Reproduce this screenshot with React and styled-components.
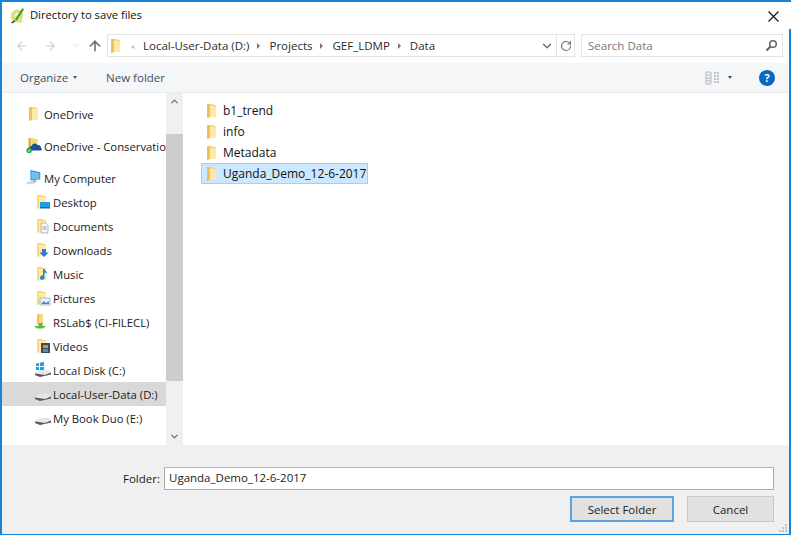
import styled, { createGlobalStyle } from "styled-components";
import { ArrowLeft, ArrowRight, ArrowUp, ChevronDown, ChevronUp, RotateCw } from "lucide-react";

const Global = createGlobalStyle`
  html, body { margin: 0; padding: 0; background: #fff; }
  * { box-sizing: border-box; }
  body { font-family: "Open Sans", "Noto Sans", "Liberation Sans", sans-serif; font-size: 11.5px; color: #1a1a1a; }
  svg { flex-shrink: 0; }
`;

const Ventana = styled.div`
  width: 791px;
  height: 535px;
  border: solid #1883d7;
  border-width: 2px 2px 1px 2px;
  display: flex;
  flex-direction: column;
  position: relative;
  &::after {
    content: "";
    position: absolute;
    top: 0;
    right: -2px;
    width: 2px;
    height: 27px;
    background: #fff;
  }
`;

const TitleBar = styled.div`
  height: 28px;
  display: flex;
  align-items: center;
  padding: 0 10px 0 8px;
  gap: 5px;
  font-size: 11.2px;
  color: #111;
`;
const Titulo = styled.span`flex: 1; margin-top: -4px;`;
const LogoWrap = styled.span`display: flex; margin-top: -1px;`;

const NavBar = styled.div`
  height: 33px;
  display: flex;
  align-items: flex-start;
  padding: 4px 6px 0 8px;
`;
const NavBtn = styled.span`
  width: ${p => p.$w || 24}px;
  height: 23px;
  display: flex;
  align-items: center;
  justify-content: center;
  color: ${p => p.$dark ? "#6f6f6f" : "#cfcfcf"};
`;
const Address = styled.div`
  width: 468px;
  height: 23px;
  border: 1px solid #e3e3e3;
  display: flex;
  align-items: center;
  padding-left: 3px;
  color: #2b2b2b;
`;
const Crumbs = styled.div`flex: 1; display: flex; align-items: center; min-width: 0;`;
const Crumb = styled.span`white-space: nowrap;`;
const Sep = styled.span`
  width: 0; height: 0;
  border-left: 3px solid #777;
  border-top: 3px solid transparent;
  border-bottom: 3px solid transparent;
  margin: 0 9px 0 8px;
`;
const Quote = styled.span`color: #888; font-size: 8px; margin: 0 8px 0 10px;`;
const AddrTool = styled.span`
  width: 18px;
  height: 21px;
  display: flex;
  align-items: center;
  justify-content: center;
  color: #6f6f6f;
  border-left: ${p => p.$sep ? "1px solid #e3e3e3" : "none"};
`;
const SearchBox = styled.div`
  width: 202px;
  height: 23px;
  margin-left: 6px;
  border: 1px solid #e3e3e3;
  display: flex;
  align-items: center;
  justify-content: space-between;
  padding: 0 4px 0 6px;
  color: #777;
`;

const ToolBar = styled.div`
  height: 30px;
  background: #f5f6f7;
  border-bottom: 1px solid #e9eaeb;
  display: flex;
  align-items: center;
  padding: 0 14px 0 18px;
  color: #3d5066;
  flex-shrink: 0;
`;
const Organize = styled.span`margin-right: 5px;`;
const Caret = styled.span`
  width: 0; height: 0;
  margin-left: ${p => p.$ml || 0}px;
  border-top: 3px solid ${p => p.$c || "#555"};
  border-left: 2.5px solid transparent;
  border-right: 2.5px solid transparent;
`;
const NewFolder = styled.span`margin-left: 29px; flex: 1;`;
const Help = styled.span`
  width: 16px;
  height: 16px;
  border-radius: 50%;
  background: #0a67c2;
  color: #fff;
  font-size: 11px;
  font-weight: 700;
  display: flex;
  align-items: center;
  justify-content: center;
  margin-left: 27px;
`;

const Content = styled.div`
  flex: 1;
  display: flex;
  min-height: 0;
`;
const Sidebar = styled.div`
  width: 164px;
  padding-top: 9px;
  overflow: hidden;
  font-size: 11.3px;
`;
const Group = styled.div`margin-bottom: 8px;`;
const NavRow = styled.div`
  height: 24px;
  display: flex;
  align-items: center;
  padding-left: ${p => p.$indent ? 32 : 24}px;
  gap: 3px;
  background: ${p => p.$active ? "#d9d9d9" : "transparent"};
  white-space: nowrap;
`;
const RowIcon = styled.span`
  width: ${p => p.$w || 16}px;
  height: 16px;
  flex-shrink: 0;
  display: flex;
  align-items: center;
  padding-left: ${p => p.$pl || 0}px;
`;
const Scrollbar = styled.div`
  width: 17px;
  background: #f0f0f0;
  display: flex;
  flex-direction: column;
  color: #606060;
`;
const ScrollBtn = styled.span`
  height: 17px;
  display: flex;
  align-items: center;
  justify-content: center;
  flex-shrink: 0;
`;
const Thumb = styled.div`
  height: 247px;
  margin-top: 24px;
  background: #cdcdcd;
  flex-shrink: 0;
`;
const ScrollGap = styled.div`flex: 1;`;

const Main = styled.div`
  flex: 1;
  padding: 7px 0 0 18px;
  font-size: 12px;
`;
const FileRow = styled.div`
  width: 167px;
  height: 21px;
  display: flex;
  align-items: center;
  gap: 6px;
  padding-left: 5px;
  background: ${p => p.$sel ? "#cce8ff" : "transparent"};
  border: 1px solid ${p => p.$sel ? "#99d1ff" : "transparent"};
  color: #111;
`;

const Footer = styled.div`
  height: 89px;
  background: #f0f0f0;
  flex-shrink: 0;
  padding: 22px 15px 0 0;
  position: relative;
`;
const FolderLine = styled.div`
  display: flex;
  align-items: center;
  justify-content: flex-end;
  gap: 4px;
`;
const Entrada = styled.div`
  width: 610px;
  height: 23px;
  background: #fff;
  border: 1px solid #a9a9a9;
  border-top-color: #b5b5b5;
  padding: 0 4px 2px;
  display: flex;
  align-items: center;
  color: #222;
`;
const Botonera = styled.div`
  display: flex;
  justify-content: flex-end;
  gap: 13px;
  margin-top: 6px;
`;
const Boton = styled.div`
  width: ${p => p.$w}px;
  height: 26px;
  background: #e1e1e1;
  border: ${p => p.$primary ? "2px solid #5fa3dc" : "1px solid #c9c9c9"};
  display: flex;
  align-items: center;
  justify-content: center;
  color: #222;
`;
const GripWrap = styled.span`
  position: absolute;
  right: 1px;
  bottom: 1px;
  display: flex;
`;

function Tall() {
  return (
    <svg width="10" height="14" viewBox="0 0 10 14">
      <path d="M0 0h6l1 1h2v12H3l-3 1z" fill="#f8d878" />
      <path d="M3 2h6v11H3z" fill="#ffe9a6" />
      <path d="M0 0h3v13l-3 1z" fill="#edc25c" />
    </svg>
  );
}

function Overlay({ kind }) {
  return (
    <svg width="18" height="16" viewBox="0 0 18 16">
      <path d="M3 1h5l1 1h3v12H6l-3 1z" fill="#f7d777" />
      <path d="M5 3h7v11H5z" fill="#ffe9a6" />
      {kind === "desktop" && <><path d="M6 8h10v6H6z" fill="#1b9be8" /><path d="M6 13h10v1.500H6z" fill="#0f6fb8" /></>}
      {kind === "docs" && <><path d="M7 5h5l2 2v8H7z" fill="#f2f4f6" stroke="#9aa3ad" strokeWidth=".7" /><path d="M8.500 9h4M8.500 11h4" stroke="#9aa3ad" /></>}
      {kind === "down" && <path d="M8 7h4v3.500h2.500L10 15l-4.500-4.500H8z" fill="#2a7fd4" />}
      {kind === "music" && <path d="M10.500 3v8.500a2.200 2.200 0 1 1-1.500-2V3zM10.500 3c0 2 3 2.500 3 5-1-1.500-2-1.500-3-1.500z" fill="#1b86dd" />}
      {kind === "pics" && <><path d="M6 8h10v7H6z" fill="#e8f1f8" stroke="#8a98a8" strokeWidth=".6" /><path d="M7 14l3-3 2 2 3-2v3z" fill="#4f86bf" /></>}
      {kind === "videos" && <><path d="M7 5h9v10H7z" fill="#3a4a63" /><path d="M9 7h5v3H9z" fill="#c79a3d" /><path d="M9 11h5v3H9z" fill="#5b86b8" /></>}
    </svg>
  );
}

function Net() {
  return (
    <svg width="16" height="16" viewBox="0 0 16 16">
      <path d="M3 0h6v10H3z" fill="#f8d878" />
      <path d="M3 0h2v10H3z" fill="#edc25c" />
      <path d="M0 12h12l-3 2.500H3z" fill="#58b947" />
      <path d="M4.500 9h4v4h-4z" fill="#58b947" />
    </svg>
  );
}

function Drive({ win }) {
  return (
    <svg width="18" height="16" viewBox="0 0 18 16">
      {win && <path d="M2 1.500l3-.500v3H2zM6 .800l4-.800v4H6zM2 5h3v3H2zM6 5h4v3.500L6 8z" fill="#1ba1e2" />}
      <path d="M1 11l5-3h9l2 2.500v2L6 15l-5-2z" fill="#e4e6e8" />
      <path d="M1 11.500l10 1.500 6-2.500v2L6 15l-5-2z" fill="#55585c" />
    </svg>
  );
}

function Computer() {
  return (
    <svg width="16" height="16" viewBox="0 0 18 18">
      <path d="M5 0l11 2.500v8l-11 1z" fill="#2c8fdc" />
      <path d="M6 1.500l9 2v6l-9 .8z" fill="#6cc0f2" />
      <path d="M0 14l6-2 7 .5-5 3.500H2z" fill="#d2d6da" />
      <path d="M9 11l3 1.500-2 1-2.500-1z" fill="#9aa1a9" />
    </svg>
  );
}

function CloudFolder() {
  return (
    <svg width="16" height="16" viewBox="0 0 18 18">
      <path d="M3 0h6l1 1h3v10H3z" fill="#f6d678" />
      <path d="M3 0h2v12H3z" fill="#cfa53f" />
      <path d="M6 14a2.500 2.500 0 0 1 .5-5 3.500 3.500 0 0 1 6.500-1 3 3 0 0 1 3.800 3 2 2 0 0 1 .2 3z" fill="#1c4f9c" />
      <circle cx="3.500" cy="14" r="3" fill="#2f9f3a" />
      <path d="M2 14l1.200 1.200L5 13" stroke="#fff" fill="none" />
    </svg>
  );
}

function Logo() {
  return (
    <svg width="15" height="17" viewBox="0 0 15 17">
      <ellipse cx="7" cy="9" rx="6" ry="6.500" fill="#d3e27c" />
      <ellipse cx="7.500" cy="9" rx="2.500" ry="3.500" fill="#f2f5cf" />
      <path d="M5 12L12.500 1 14 2.500 7 13.500z" fill="#4c9a2a" />
      <path d="M8 12.500c2-.5 4 .5 5 2.500l-3 1c-1 0-2-1.500-2-3.500z" fill="#dfe584" />
      <path d="M1 15.500l3.500-2.500 1 1-3 2.500z" fill="#26531a" />
    </svg>
  );
}

function ViewIcon() {
  return (
    <svg width="16" height="14" viewBox="0 0 16 14">
      <path d="M1 1h5v12H1z" fill="#eef0f2" stroke="#b7bcc2" />
      <path d="M1 4h5M1 7h5M1 10h5" stroke="#b7bcc2" />
      <path d="M9 2h6M9 5h6M9 8h6M9 11h6" stroke="#a9b3bd" strokeWidth="1.500" strokeDasharray="2 1" />
    </svg>
  );
}

function CloseIcon() {
  return (
    <svg width="11" height="11" viewBox="0 0 11 11">
      <path d="M.5.500l10 10M10.500.500l-10 10" stroke="#111" strokeWidth="1.100" />
    </svg>
  );
}

function SearchIcon() {
  return (
    <svg width="13" height="13" viewBox="0 0 13 13">
      <circle cx="8" cy="5" r="3.300" fill="none" stroke="#666" strokeWidth="1.500" />
      <path d="M5.500 7.500L1.500 11.500" stroke="#666" strokeWidth="2.200" />
    </svg>
  );
}

function GripIcon() {
  return (
    <svg width="10" height="10" viewBox="0 0 10 10">
      <path d="M7 1h2v2H7zM4 4h2v2H4zM7 4h2v2H7zM1 7h2v2H1zM4 7h2v2H4zM7 7h2v2H7z" fill="#c4c4c4" />
    </svg>
  );
}

const carpetas = ["b1_trend", "info", "Metadata", "Uganda_Demo_12-6-2017"];

export default function App() {
  return (
    <>
      <Global />
      <Ventana>
        <TitleBar>
          <LogoWrap><Logo /></LogoWrap>
          <Titulo>Directory to save files</Titulo>
          <CloseIcon />
        </TitleBar>

        <NavBar>
          <NavBtn $w={23}><ArrowLeft size={14} /></NavBtn>
          <NavBtn $w={34}><ArrowRight size={14} /></NavBtn>
          <NavBtn $w={16}><ChevronDown size={9} /></NavBtn>
          <NavBtn $w={24} $dark><ArrowUp size={16} strokeWidth={2.4} /></NavBtn>
          <Address>
            <Crumbs>
              <Tall />
              <Quote>«</Quote>
              <Crumb>Local-User-Data (D:)</Crumb>
              <Sep />
              <Crumb>Projects</Crumb>
              <Sep />
              <Crumb>GEF_LDMP</Crumb>
              <Sep />
              <Crumb>Data</Crumb>
            </Crumbs>
            <AddrTool><ChevronDown size={14} strokeWidth={2.4} /></AddrTool>
            <AddrTool $sep><RotateCw size={12} strokeWidth={2.2} /></AddrTool>
          </Address>
          <SearchBox>
            <span>Search Data</span>
            <SearchIcon />
          </SearchBox>
        </NavBar>

        <ToolBar>
          <Organize>Organize</Organize>
          <Caret />
          <NewFolder>New folder</NewFolder>
          <ViewIcon />
          <Caret $c="#3d5066" $ml={7} />
          <Help>?</Help>
        </ToolBar>

        <Content>
          <Sidebar>
            <Group>
              <NavRow>
                <RowIcon $w={15} $pl={3}><Tall /></RowIcon>
                <span>OneDrive</span>
              </NavRow>
            </Group>
            <Group>
              <NavRow>
                <RowIcon $w={15}><CloudFolder /></RowIcon>
                <span>OneDrive - Conservation International</span>
              </NavRow>
            </Group>
            <NavRow><RowIcon $w={15}><Computer /></RowIcon><span>My Computer</span></NavRow>
            <NavRow $indent><RowIcon><Overlay kind="desktop" /></RowIcon><span>Desktop</span></NavRow>
            <NavRow $indent><RowIcon><Overlay kind="docs" /></RowIcon><span>Documents</span></NavRow>
            <NavRow $indent><RowIcon><Overlay kind="down" /></RowIcon><span>Downloads</span></NavRow>
            <NavRow $indent><RowIcon><Overlay kind="music" /></RowIcon><span>Music</span></NavRow>
            <NavRow $indent><RowIcon><Overlay kind="pics" /></RowIcon><span>Pictures</span></NavRow>
            <NavRow $indent><RowIcon><Net /></RowIcon><span>RSLab$ (CI-FILECL)</span></NavRow>
            <NavRow $indent><RowIcon><Overlay kind="videos" /></RowIcon><span>Videos</span></NavRow>
            <NavRow $indent><RowIcon><Drive win /></RowIcon><span>Local Disk (C:)</span></NavRow>
            <NavRow $indent $active><RowIcon><Drive /></RowIcon><span>Local-User-Data (D:)</span></NavRow>
            <NavRow $indent><RowIcon><Drive /></RowIcon><span>My Book Duo (E:)</span></NavRow>
          </Sidebar>

          <Scrollbar>
            <ScrollBtn><ChevronUp size={11} strokeWidth={2.2} /></ScrollBtn>
            <Thumb />
            <ScrollGap />
            <ScrollBtn><ChevronDown size={11} strokeWidth={2.2} /></ScrollBtn>
          </Scrollbar>

          <Main>
            {carpetas.map((n, i) => (
              <FileRow key={n} $sel={i === 3}>
                <RowIcon $w={10}><Tall /></RowIcon>
                {n}
              </FileRow>
            ))}
          </Main>
        </Content>

        <Footer>
          <FolderLine>
            <span>Folder:</span>
            <Entrada>Uganda_Demo_12-6-2017</Entrada>
          </FolderLine>
          <Botonera>
            <Boton $w={104} $primary>Select Folder</Boton>
            <Boton $w={87}>Cancel</Boton>
          </Botonera>
          <GripWrap><GripIcon /></GripWrap>
        </Footer>
      </Ventana>
    </>
  );
}
